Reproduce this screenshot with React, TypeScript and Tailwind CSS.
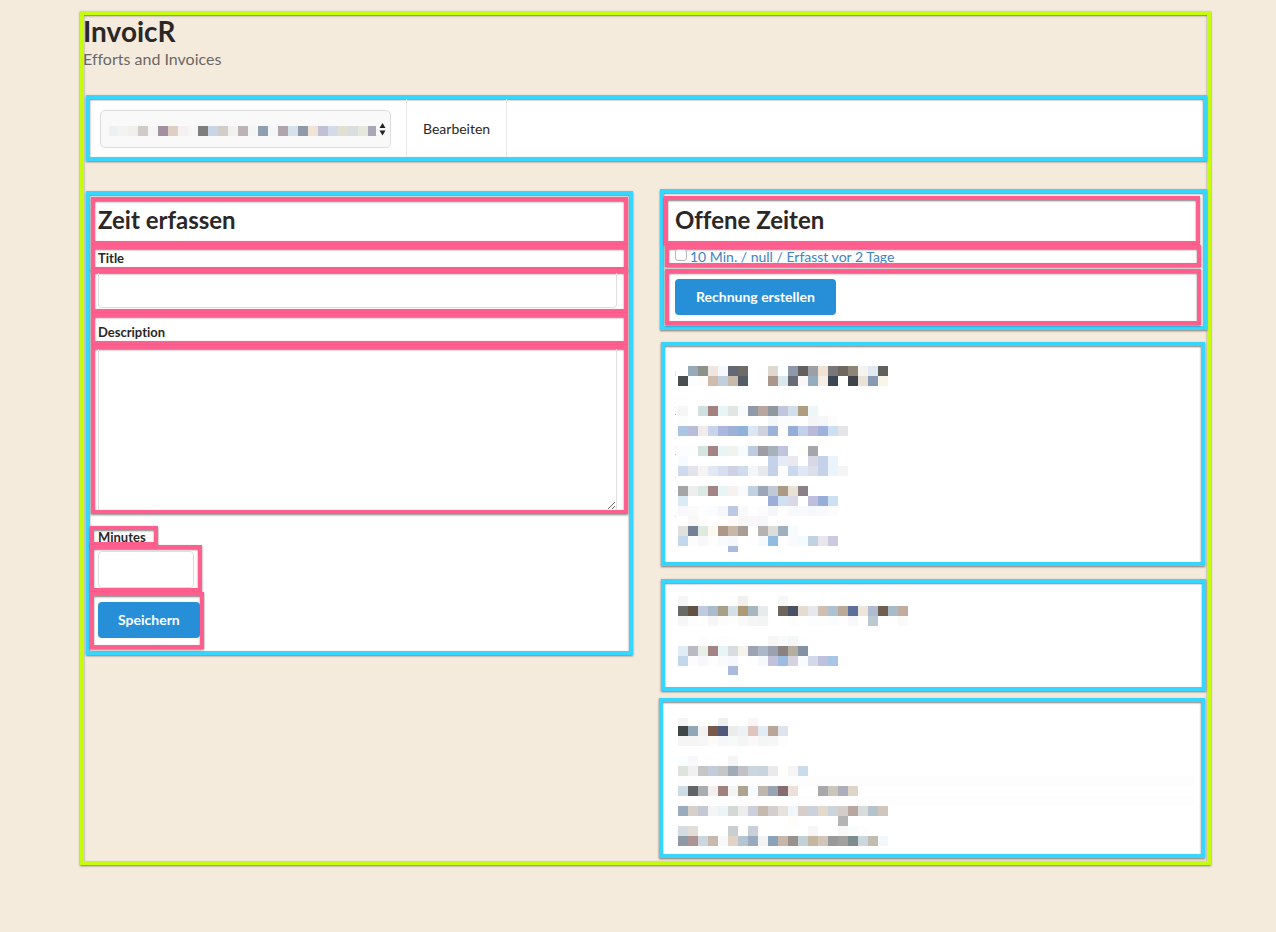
import type { ReactNode } from "react";

type MosaicRow = { y: number; h?: number; cells: string };

const frameShadow =
  "shadow-[0_1px_2px_rgba(0,0,0,0.5),inset_0_1px_2px_rgba(0,0,0,0.5)]";

function Panel({ className = "", children }: { className?: string; children: ReactNode }) {
  return (
    <section className={`border-4 border-[#38d6ff] bg-white ${frameShadow} ${className}`}>
      {children}
    </section>
  );
}

function Frame({ className = "", children }: { className?: string; children: ReactNode }) {
  return (
    <div className={`relative border-4 border-[#ff5f8f] ${frameShadow} ${className}`}>
      {children}
    </div>
  );
}

/* Pixelated stand-in for private text: one 10px square per entry, "-" leaves a gap. */
function Mosaic({
  rows,
  width,
  height,
  className = "",
  children,
}: {
  rows: MosaicRow[];
  width: number;
  height: number;
  className?: string;
  children?: ReactNode;
}) {
  return (
    <svg
      width={width}
      height={height}
      shapeRendering="crispEdges"
      aria-hidden="true"
      className={`block max-w-none overflow-visible ${className}`}
    >
      {rows.flatMap((row) =>
        row.cells.split(" ").map((cell, i) =>
          cell === "-" ? null : (
            <rect
              key={`${row.y}-${i}`}
              x={i * 10}
              y={row.y}
              width={10}
              height={row.h ?? 10}
              fill={`#${cell}`}
            />
          ),
        ),
      )}
      {children}
    </svg>
  );
}

const customerRows: MosaicRow[] = [
  {
    y: 0,
    cells:
      "edf1f2 f3f3f2 f1f0ec d1cbc7 f5f5f5 a48fa1 ddcfc2 f4f0f0 f6f6f6 7e7e7e c7d5e6 d2cdc9 f2f1f0 bcb4b4 f4f6f6 8f9fb2 f3f6f5 b0a4ae d5e1eb 8e9aa8 f0e3d7 c2c0d4 d4dbe8 e2e0d4 d9dede e6e7dd aaa8b6",
  },
];

const firstRows: MosaicRow[] = [
  { y: 0, cells: "- 98a9b9 8f928a efe6e0 f5f9fd 636974 6d6b65 - fefefe ded8cf fbffff 8f98a8 62605f 9c9fa6 efe2d3 7a777a 6e6860 8f8478 f4f3f1 e1e9f1 60605d" },
  { y: 10, cells: "4a5052 f9feff fdfcf9 cfbcae c1cfdd c9bbac 555d68 - fefefe aa968c d9e8ef 656c75 fbf7f6 95abbf f4eee7 3a4854 - 3f444b eae1d7 8799b3 f8f5e9" },
  { y: 40, cells: "f5f6f6 - d1e0df a2817f e8f5f7 e0e6e1 f6fafd 8f9ba8 b7a79e 8f989f c1c6dd d1ddea af9d82 eef7f8" },
  { y: 50, cells: "fdfdfd - - - - - - - - f5f7fa fafcff fcfcfd - f5f5f5 f5f6f9 fcfcfc" },
  { y: 60, cells: "abc4e3 b8bdda f1ebec c8d4eb aab8df a0b1d7 8fb1da dae6f2 cfd2dd 9db2da fcfcfd 95aed8 c2d1e9 b9b9d9 9fb2db cddff1 e5e4e9" },
  { y: 80, cells: "fdfdfd fdfdfd d5e4e1 a28484 e8f5f7 f1f3ed f6fbfe bdcddf 9f9ca4 a7b1ba c0c5dd fcffff fefdf9 a5a6a9" },
  { y: 90, cells: "f5fbfe - - - - - - - - c5d3ea e5ecf7 eae9f0 - d8d7e5 c4d1e8 ebf4fc" },
  { y: 100, cells: "d0daed e3e3eb f7f3f4 e1e9f4 d7def0 cfd1e5 d0dced f4f7fa e7e8eb c3d1e9 fdfdfd cad9ed e0e8f5 dcdeec c4d2ea ebf4fc f5f5f5" },
  { y: 120, cells: "a5a5a7 eeeeef dce8e2 a28484 e8f5f7 f6f2f0 f8fafb c1d1df 9ba7b6 bfcad6 ab9986 e8e1d4 8b8087" },
  { y: 130, cells: "dceaf6 - - - - - - - - 9caed8 d0e0f3 dbd8e5 - bfbedd 96aed8 cddff2" },
  { y: 140, cells: "f7f8fd fbfafa fdfdfd fafbfe f6f7fc bdc9e2 f8f9fd fefefe fcfcfe f5f6fb fefefe f8f9fc f9f9fd f7f8fc f8f8fd fcfcfd" },
  { y: 150, cells: "- f9f8f7 fdfefb - fdfdfb fdfaf8 f7f7f6 f9f7f7 f6f7f8 - fdfdfd" },
  { y: 160, cells: "e0e0dc 748096 deeae0 f9f9f0 af9788 c7b7a9 aa9e94 fdffff b7b1b1 deded9 9eafbd f6fbfd" },
  { y: 170, cells: "c1d8ed fcfcfc f6f8fa fdfdfd f9fafd f7f8fd - fefefe f4fafd 90bce0 fefefe fbfafb f2fcfe c1d2e3 e8e5ec cbcae0" },
  { y: 180, h: 6, cells: "- - - - - aab9dc" },
];

const secondRows: MosaicRow[] = [
  { y: 0, cells: "f6f6f6 - - - - fdfdfd f1f0ec - - - f5f8f7" },
  { y: 10, cells: "676a65 635244 c0cadf aabbce aa9f87 d3e0e5 ae9977 a6b7c0 e8ebec - 6e665c 485166 e5dccf e5e8ed d0beb0 adc1d1 bbaa97 5f6f9b eee6dc b0bad0 705e52 a9bbc6 c0ada0" },
  { y: 20, cells: "f6f6f6 fdfdfd fdfefe f6f6f7 fcfdfa fdfefe f8f9f8 f5f5f6 f4f4f4 - - fdfdfb fefefe fcfdfe fdfdfb f8fdfe fefefe f7f8fa fefefe bbc9d0 fefefe fefefe fcfaf9" },
  { y: 40, cells: "- - fdfdfd - fdfdfd fefefe - - - f7f6f5 f9fafc f5f6f6 fcfffe" },
  { y: 50, cells: "e1edf5 babac4 e7efe7 a28484 e8f5f7 d8dee0 f6f2ed 9ba4b0 acb8ca 9ba1af 8a8281 b3aea0 8291a4" },
  { y: 60, cells: "c1d8ed fcfcfd f6f8fb fdfdfd f8fafc f7f8fd - fefefe f4f9fe c1c1dc 9dbce2 d7d2e1 f9fcff d4d9e9 c0c1dd a7c5e5 fdfdfd" },
  { y: 70, h: 9, cells: "- - - - - aab9dc" },
];

const thirdRows: MosaicRow[] = [
  { y: 2, h: 8, cells: "f5f5f5 - - - eef0f0 - - f9f6f5" },
  { y: 10, cells: "3f4647 91a7b8 f3f2f0 79584c 50597a ecedeb edf2f6 dec6be e2ecf5 b9a699 dee3ed" },
  { y: 20, cells: "f5f5f5 f5f5f5 f5f6f6 fdfaf8 f5f8fa f8f9f9 f4f5f5 fbf9f8 f4f5f5 f5f7f6 fdfdfd" },
  { y: 40, cells: "f9feff f6f8fa - - - f5f5f5" },
  { y: 50, cells: "dee3dd f0f0f0 c5c5c4 c2ccdd c5c6c7 9facb7 c1c1c6 cad5df c8d5df e9eaec fefefd f6f4f5 cadbea" },
  { y: 70, cells: "cedce6 5f6566 a9adaf f2f0ef a0817f f3f4f4 aea38e f4fafe bfb6ae 98a4b2 866c70 ece0d8 - - a8a7a9 cac7ba aeadbb ded7c9" },
  { y: 90, cells: "9aabc0 d7cfca c4c8d1 f4f5f5 edf4f8 d5d9d6 edeeeb cdcfda c6b9ad d3cfcf e8e2dc eff7fb d7cdca cbd2dd e1d9cc cbd3db d4cdc9 b8a79f d8dcda b5c3ca d0c6be" },
  { y: 100, cells: "- - - - - - - - - - - fefdf9 - - - - b3b4b3" },
  { y: 110, cells: "d4dce3 e2ded5 - - - c9cfd1 - c8d1da - - - - - f7f7f7 - - f8f8f6 f9fcfc fdfdfd" },
  { y: 120, cells: "8d99a5 ac9394 ccd6dd c7b9ac f6f8f9 e2d2c6 b5c4d1 98aabe f3f3f3 8ba3b8 c6b7aa 99918b c2d1d7 c4b69f d3c5ba 979a98 a0a09f 7d8d8f cbd7df c2bcb0 f2f8fb" },
];

const buttonLook = "block h-9 rounded bg-[#268fd8] text-sm font-bold text-white";

export default function App() {
  return (
    <div className="flow-root min-h-screen bg-[#f5ebdd] pb-10 font-['Lato',sans-serif] text-sm text-[#2b2727] [font-variant-ligatures:no-common-ligatures]">
      <main
        className={`mt-[11px] mr-[65px] ml-20 border-4 border-[#c6fb12] pb-[3px] pl-0.5 ${frameShadow}`}
      >
        <header className="-ml-[3px] h-20">
          <h1 className="text-[28px] leading-8 font-bold">InvoicR</h1>
          <p className="text-base leading-6 text-[#6b6764]">Efforts and Invoices</p>
        </header>

        <nav className={`flex h-[66px] items-stretch border-4 border-[#38d6ff] bg-white ${frameShadow}`}>
          <div className="flex items-center border-r border-[#e8e8e8] pt-0.5 pr-[15px] pl-2.5">
            <div className="relative">
              <select
                aria-label="Kunde"
                className="block h-[38px] w-[291px] appearance-none rounded-[5px] border border-[#dcdcdc] bg-[#f9f9f9]"
              />
              <Mosaic
                rows={customerRows}
                width={268}
                height={10}
                className="pointer-events-none absolute top-4 left-2 [clip-path:inset(0_0_0_1px)]"
              />
              <svg
                width="7"
                height="13"
                viewBox="0 0 7 13"
                aria-hidden="true"
                className="pointer-events-none absolute top-[13px] right-[5px]"
              >
                <path d="M3.5 0 6.5 5H.5ZM3.5 12.5.5 7.5h6Z" fill="#222" />
              </svg>
            </div>
          </div>
          <a
            href="#bearbeiten"
            className="flex items-center border-r border-[#e8e8e8] px-4 pt-0.5"
          >
            Bearbeiten
          </a>
        </nav>

        <div className="mt-7 grid grid-cols-2 items-start gap-[27px]">
          <Panel className="mt-0.5 pt-0.5 pr-px pb-0.5 pl-px">
            <form>
              <Frame className="h-12 pl-[3px]">
                <h2 className="text-2xl leading-[38px] font-bold">Zeit erfassen</h2>
              </Frame>
              <Frame className="h-[26px] pl-[3px]">
                <label htmlFor="title" className="block text-[13px] leading-[18px] font-bold">
                  Title
                </label>
              </Frame>
              <Frame className="-mt-0.5 h-11 pr-[7px] pl-[3px]">
                <input
                  id="title"
                  type="text"
                  className="block h-[35px] w-full rounded-b border border-t-0 border-[#dedede] px-3"
                />
              </Frame>
              <Frame className="h-8 pl-[3px]">
                <label htmlFor="description" className="block text-[13px] leading-[30px] font-bold">
                  Description
                </label>
              </Frame>
              <Frame className="h-[169px] pr-[7px] pl-[3px]">
                <textarea
                  id="description"
                  className="block h-[161px] w-full resize-y border-x border-[#dedede] px-3"
                />
              </Frame>
              <div className="-ml-px">
                <Frame className="mt-3 h-5 w-[68px] pl-1">
                  <label htmlFor="minutes" className="block text-[13px] leading-[14px] font-bold">
                    Minutes
                  </label>
                </Frame>
                <Frame className="-mt-px h-[47px] w-28 px-1 pt-0.5">
                  <input
                    id="minutes"
                    type="text"
                    className="block h-[37px] w-full rounded border border-[#dedede] px-3"
                  />
                </Frame>
                <Frame className="h-[57px] w-[114px] overflow-hidden pt-1.5 pl-1">
                  <button type="submit" className={`${buttonLook} px-5`}>
                    Speichern
                  </button>
                </Frame>
              </div>
            </form>
          </Panel>

          <div className="flex min-w-0 flex-col">
            <Panel className="pt-[3px] pr-0.5 pb-px">
              <Frame className="mr-px h-[49px] pl-[7px]">
                <h2 className="text-2xl leading-10 font-bold">Offene Zeiten</h2>
              </Frame>
              <Frame className="ml-px h-[22px] overflow-hidden pl-1.5">
                <label className="flex items-start gap-[3px] leading-4 text-[#4183c4]">
                  <input
                    type="checkbox"
                    className="size-3 shrink-0 appearance-none rounded-[3px] border border-[#b5b5b5] bg-white"
                  />
                  <span>10 Min. / null / Erfasst vor 2 Tage</span>
                </label>
              </Frame>
              <Frame className="mt-0.5 ml-px h-14 pt-1.5 pl-1.5">
                <button type="button" className={`${buttonLook} px-[21px]`}>
                  Rechnung erstellen
                </button>
              </Frame>
            </Panel>

            <Panel className="mt-3 mr-0.5 ml-px pt-5 pb-2.5 pl-[13px]">
              <Mosaic rows={firstRows} width={210} height={186}>
                <path
                  d="M-3 5h1v5h-1ZM-3 41h1v1h-1ZM-3 81h1v1h-1ZM-3 125h1v1h-1Z"
                  fill="#fbe0bd"
                />
                <path d="M-3 48h1v1h-1ZM-3 88h1v1h-1Z" fill="#dfa66c" />
                <path d="M-3 72h1v1h-1ZM-3 111h1v1h-1ZM-3 150h1v1h-1Z" fill="#d8d8d8" />
              </Mosaic>
            </Panel>

            <Panel className="mt-[13px] mr-px ml-px pt-[13px] pb-3 pl-[13px]">
              <Mosaic rows={secondRows} width={230} height={79} />
            </Panel>

            <Panel className="mt-[7px] mr-0.5 -ml-px pt-3.5 pr-[9px] pb-2 pl-[15px]">
              <Mosaic rows={thirdRows} width={210} height={130}>
                <path d="M0 60h517v10H0ZM0 80h517v10H0Z" fill="#fdfdfd" />
              </Mosaic>
            </Panel>
          </div>
        </div>
      </main>
    </div>
  );
}
